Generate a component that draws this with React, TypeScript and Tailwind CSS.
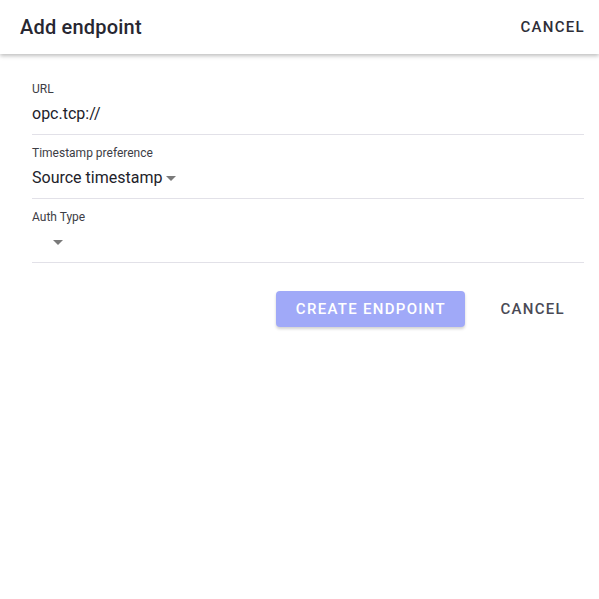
import React from "react";

function Caret() {
  return (
    <svg width="10" height="5" viewBox="0 0 10 5" className="shrink-0">
      <path d="M0 0 L10 0 L5 5 Z" fill="#7a7a7a" />
    </svg>
  );
}

function Field({ label, children }: { label: string; children: React.ReactNode }) {
  return (
    <div className="flex flex-col border-b border-[#e2e1e8] pt-[10px] pb-[8px]">
      <span className="text-[12px] leading-[16px] text-[#3d3d45]">{label}</span>
      <div className="mt-[5px] flex h-[24px] items-center text-[16px] text-[#22222a]">{children}</div>
    </div>
  );
}

export default function App() {
  return (
    <div className="min-h-[599px] w-full bg-white" style={{ fontFamily: "Roboto, 'Liberation Sans', sans-serif" }}>
      <header className="relative z-10 flex h-[54px] items-center justify-between pl-[20px] pr-[14px] shadow-[0_2px_4px_rgba(0,0,0,0.25)]">
        <h1 className="text-[20px] font-medium tracking-[0.2px] text-[#272731]">Add endpoint</h1>
        <button className="text-[15px] font-medium uppercase tracking-[1.3px] text-[#2e2e38]">Cancel</button>
      </header>

      <form className="flex flex-col pl-[32px] pr-[15px] pt-[17px]">
        <Field label="URL">
          <span>opc.tcp://</span>
        </Field>
        <Field label="Timestamp preference">
          <span>Source timestamp</span>
          <span className="ml-[4px]">
            <Caret />
          </span>
        </Field>
        <Field label="Auth Type">
          <span className="w-[21px]" />
          <Caret />
        </Field>

        <div className="mt-[28px] flex items-center justify-end gap-[19px] pr-[3px]">
          <button
            type="button"
            className="h-[36px] w-[189px] rounded-[4px] bg-[#a0a9f8] text-[15px] font-medium uppercase tracking-[1.3px] text-white shadow-[0_2px_3px_rgba(0,0,0,0.18)]"
          >
            Create endpoint
          </button>
          <button type="button" className="h-[36px] px-[16px] text-[15px] font-medium uppercase tracking-[1.3px] text-[#4a4a55]">
            Cancel
          </button>
        </div>
      </form>
    </div>
  );
}
